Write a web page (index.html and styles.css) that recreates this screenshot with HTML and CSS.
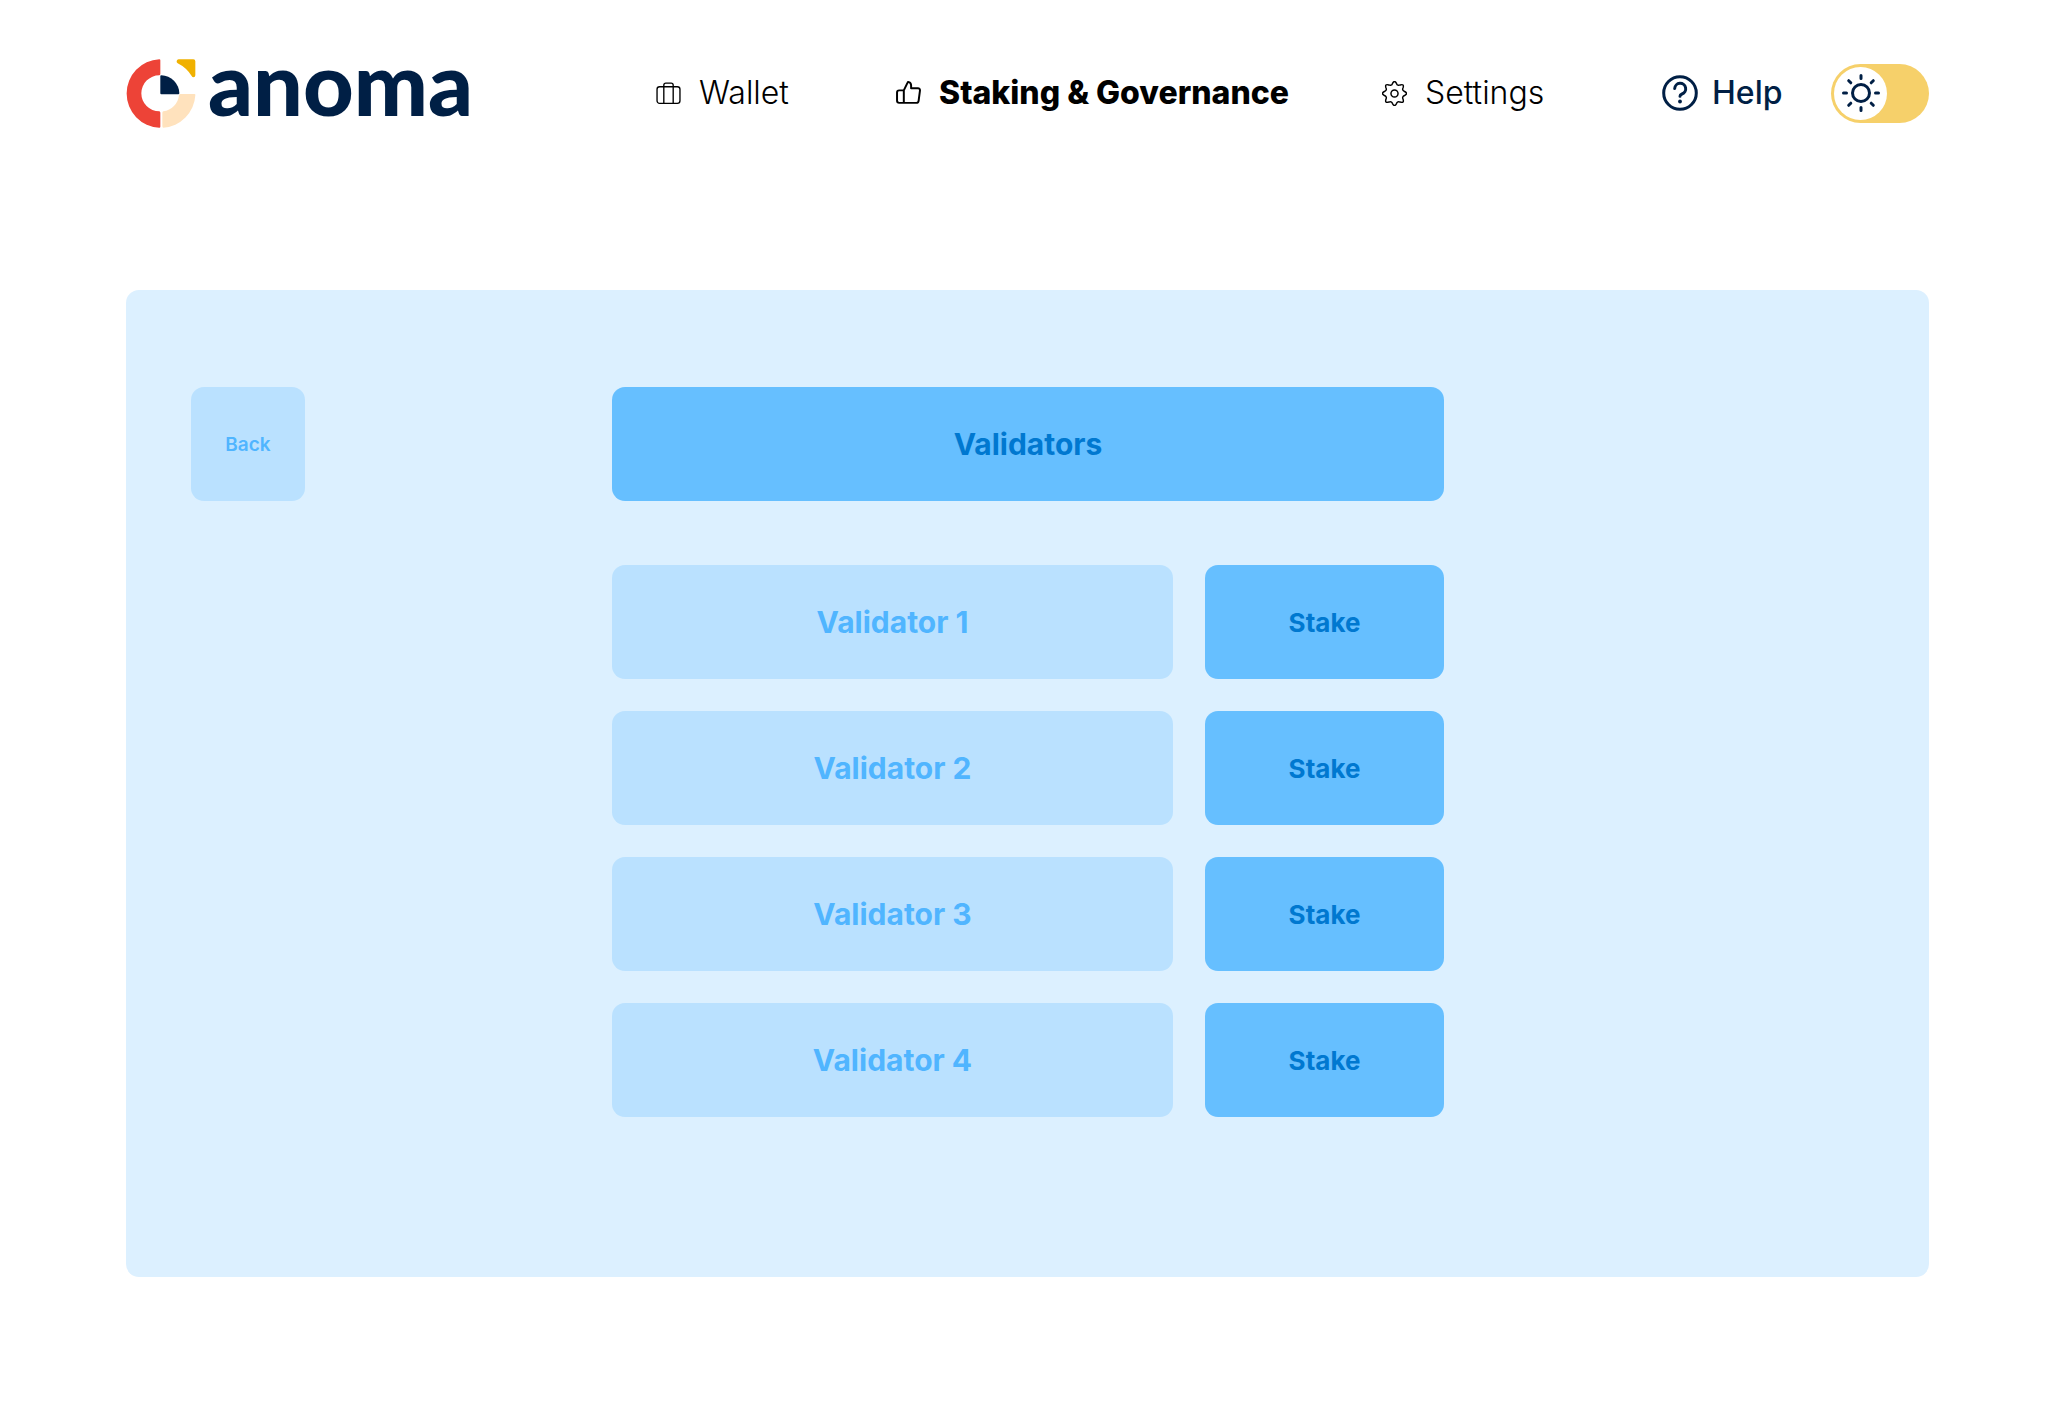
FILE: index.html
```
<!DOCTYPE html>
<html lang="en">
<head>
<meta charset="utf-8">
<title>Anoma – Validators</title>
<link rel="stylesheet" href="styles.css">
</head>
<body>
<header class="header">
  <a class="logo" href="#">
    <svg class="logo-mark" viewBox="48 56 208 207" aria-hidden="true">
      <path fill="#ed4337" d="M147 57Q150 57 150 60V101Q150 104 147 105A54 54 0 0 0 147 213Q150 214 150 217V259Q150 262 147 262A102.600 102.600 0 0 1 147 57Z"/>
      <path fill="#001f45" d="M150 107Q150 105 153 105A55 55 0 0 1 207 159Q207 162 204 162H153Q150 162 150 159Z"/>
      <path fill="#ffe2bd" d="M210 161H252Q256 161 255 165A103 103 0 0 1 159 262Q156 262 156 258V217Q156 214 159 213A54 54 0 0 0 206 165Q207 161 210 161Z"/>
      <path fill="#f0b100" d="M205 57H249Q255 57 255 63V105Q255 111 249 111Q246 111 244 107A105 105 0 0 0 202 69Q198 66 199 62Q200 57 205 57Z"/>
    </svg>
    <span class="logo-text">anoma</span>
  </a>
  <nav class="nav" aria-label="Main">
    <a class="nav-link" href="#">
      <svg class="icon" viewBox="0 0 24 24" aria-hidden="true"><g fill="none" stroke="#000" stroke-width="1.300"><rect x="1" y="5.500" width="22" height="16" rx="2.500"/><path d="M7.500 21.500V4Q7.500 2 9.500 2H14.500Q16.500 2 16.500 4V21.500"/></g></svg>
      <span>Wallet</span>
    </a>
    <a class="nav-link nav-link-active" href="#" aria-current="page">
      <svg class="icon" viewBox="0 0 24 24" aria-hidden="true"><path fill="none" stroke="#000" stroke-width="1.900" stroke-linejoin="round" d="M7.500 9V21H3Q1 21 1 19V11Q1 9 3 9H7.500L11 1.800Q11.400 0.800 12.300 1.100Q14.500 1.800 14.500 4.300V7H21Q23.200 7 23 9.200L21.700 19Q21.400 21 19.400 21H7.500"/></svg>
      <span>Staking &amp; Governance</span>
    </a>
    <a class="nav-link" href="#">
      <svg class="icon" viewBox="0 0 24 24" aria-hidden="true"><g fill="none" stroke="#000" stroke-width="1.400" stroke-linejoin="round"><circle cx="12" cy="12" r="3.400"/><path d="M21.700 10.100Q25.400 12 21.700 13.900Q19 14.900 20.200 17.500Q21.500 21.500 17.500 20.200Q14.900 19 13.900 21.700Q12 25.400 10.100 21.700Q9.100 19 6.500 20.200Q2.500 21.500 3.800 17.500Q5 14.900 2.300 13.900Q-1.400 12 2.300 10.100Q5 9.100 3.800 6.500Q2.500 2.500 6.500 3.800Q9.100 5 10.100 2.300Q12 -1.400 13.900 2.300Q14.900 5 17.500 3.800Q21.500 2.500 20.200 6.500Q19 9.100 21.700 10.100Z"/></g></svg>
      <span>Settings</span>
    </a>
  </nav>
  <div class="tools">
    <a class="help" href="#">
      <svg class="help-icon" viewBox="0 0 36 36" aria-hidden="true"><g fill="none" stroke="#001f45" stroke-width="3" stroke-linecap="round" stroke-linejoin="round"><circle cx="18" cy="18" r="16.300"/><path d="M12.700 13.500A5.500 5.500 0 1 1 20 19Q18 19.800 18 21.300"/></g><circle cx="18" cy="26.500" r="1.900" fill="#001f45"/></svg>
      <span>Help</span>
    </a>
    <label class="toggle">
      <input class="toggle-input" type="checkbox" role="switch" aria-label="Dark theme">
      <span class="toggle-knob">
        <svg class="sun" viewBox="0 0 40 40" aria-hidden="true"><g fill="none" stroke="#001f45" stroke-width="3" stroke-linecap="round"><circle cx="20" cy="20" r="8.500"/><path d="M20 2.500V5.500M20 34.500V37.500M2.500 20H5.500M34.500 20H37.500M7.700 7.700L9.800 9.800M30.200 30.200L32.300 32.300M7.700 32.300L9.800 30.200M30.200 9.800L32.300 7.700"/></g></svg>
      </span>
    </label>
  </div>
</header>
<main class="panel">
  <button class="back" type="button">Back</button>
  <section class="validators">
    <h1 class="title">Validators</h1>
    <ul class="list">
      <li class="row"><span class="name">Validator 1</span><button class="stake" type="button">Stake</button></li>
      <li class="row"><span class="name">Validator 2</span><button class="stake" type="button">Stake</button></li>
      <li class="row"><span class="name">Validator 3</span><button class="stake" type="button">Stake</button></li>
      <li class="row"><span class="name">Validator 4</span><button class="stake" type="button">Stake</button></li>
    </ul>
  </section>
</main>
</body>
</html>
```
FILE: styles.css
```
* { box-sizing: border-box; }

body {
  margin: 0;
  padding: 0 131px 141px 126px;
  background: #fff;
  color: #000;
  font-family: Inter, "Open Sans", sans-serif;
}

a { color: inherit; text-decoration: none; }
button { border: 0; padding: 0; font-family: inherit; cursor: pointer; }

.header {
  display: grid;
  grid-template-columns: 530fr 1006fr 267px;
  align-items: center;
  padding: 48px 0 152px;
}

.logo { display: flex; align-items: center; gap: 12px; height: 90px; color: #001f45; }
.logo-mark { width: 70px; height: 69px; }
.logo-text { font-family: Lato, sans-serif; font-size: 88px; font-weight: 900; line-height: 64px; padding-bottom: 22px; }

.nav { display: grid; grid-template-columns: 240fr 486fr 280fr; }
.nav-link { display: flex; align-items: center; gap: 18px; font-size: 32px; font-weight: 300; line-height: 40px; white-space: nowrap; }
.nav-link-active { font-weight: 800; }
.icon { width: 25px; height: 25px; flex: none; }

.tools { display: flex; align-items: center; justify-content: space-between; color: #001f45; }
.help { display: flex; align-items: center; gap: 14px; font-size: 32px; font-weight: 500; line-height: 40px; }
.help-icon { width: 36px; height: 36px; }

.toggle { position: relative; display: flex; align-items: center; width: 98px; height: 59px; padding: 3px; border-radius: 30px; background: #f6d06a; cursor: pointer; }
.toggle-input { position: absolute; inset: 0; width: 100%; height: 100%; margin: 0; opacity: 0; cursor: pointer; }
.toggle-knob { display: grid; place-items: center; width: 53px; height: 53px; border-radius: 50%; background: #fff; }
.sun { width: 40px; height: 40px; }

.panel {
  display: grid;
  grid-template-columns: 1fr minmax(0, 832px) 1fr;
  align-items: start;
  padding: 97px 64px 160px 65px;
  border-radius: 13px;
  background: #dcf0ff;
}

.back { width: 114px; height: 114px; border-radius: 13px; background: #bae1ff; color: #50b5ff; font-size: 19px; font-weight: 600; }

.validators { display: grid; gap: 64px; }
.title, .name, .stake { display: grid; place-items: center; height: 114px; margin: 0; border-radius: 13px; font-weight: 700; }
.title { background: #66bfff; color: #0078d0; font-size: 30px; }
.list { display: grid; gap: 32px; margin: 0; padding: 0; list-style: none; }
.row { display: grid; grid-template-columns: 561fr 239fr; gap: 32px; }
.name { background: #bae1ff; color: #50b5ff; font-size: 30px; }
.stake { background: #66bfff; color: #0078d0; font-size: 26px; }
```
